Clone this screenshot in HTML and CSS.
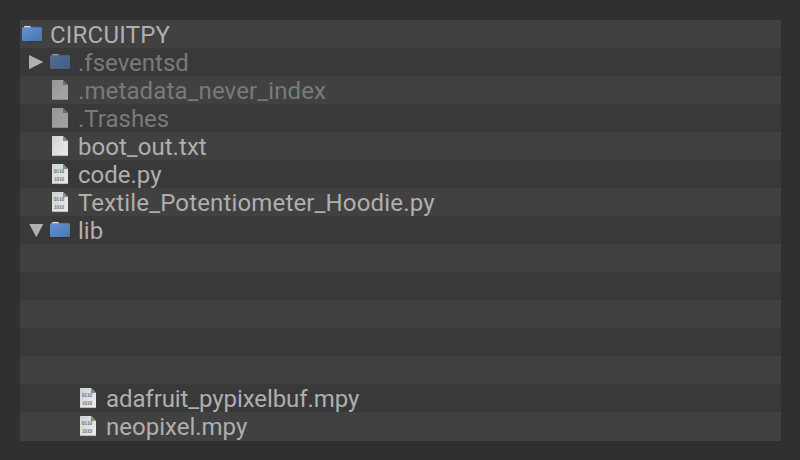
FILE: index.html
```html
<!DOCTYPE html>
<html lang="en">
<head>
<meta charset="utf-8">
<title>CIRCUITPY</title>
<link rel="stylesheet" href="styles.css">
</head>
<body>
<svg class="defs" width="0" height="0">
  <defs>
    <linearGradient id="blue" x1="0" y1="0" x2="1" y2="1"><stop offset="0" stop-color="#6094d0"/><stop offset="1" stop-color="#4a76b0"/></linearGradient>
    <linearGradient id="paper" x1="0" y1="0" x2="1" y2="1"><stop offset="0" stop-color="#d0d2d1"/><stop offset="1" stop-color="#ececec"/></linearGradient>
    <symbol id="folder" viewBox="0 0 24 28">
      <path d="M4 8V6.6Q4 6 5 6h5l1 1v1.4z" fill="#dedede"/>
      <path d="M11 6.4h10v1H11z" fill="#35506f"/>
      <path d="M7 21h14.5v.6H7z" fill="#26303c"/>
      <path d="M2 8.2Q2 7.2 3.2 7.2h17.6Q22 7.2 22 8.2v11.6q0 1.2-1.2 1.2H3.2Q2 21 2 19.8z" fill="url(#blue)"/>
    </symbol>
    <symbol id="file" viewBox="0 0 24 28">
      <path d="M4 4h11l5 5v15H4z" fill="url(#paper)"/>
      <path d="M15 4v5h5z" fill="#858988"/>
      <path d="M4 23.6h16" stroke="#a8acab" stroke-width=".8"/>
    </symbol>
    <symbol id="binary" viewBox="0 0 24 28">
      <use href="#file"/>
      <text x="6" y="13" textLength="10" lengthAdjust="spacingAndGlyphs">0110</text>
      <text x="6" y="21" textLength="10" lengthAdjust="spacingAndGlyphs">1010</text>
    </symbol>
  </defs>
</svg>
<ul class="tree">
  <li class="row"><svg class="icon"><use href="#folder"/></svg><span class="name wide">CIRCUITPY</span></li>
  <li class="row child"><svg class="arrow" viewBox="0 0 28 28"><path d="M9 7v14.2L23.4 14z"/></svg><svg class="icon hidden-item"><use href="#folder"/></svg><span class="name dim">.fseventsd</span></li>
  <li class="row child"><i class="arrow"></i><svg class="icon hidden-item"><use href="#file"/></svg><span class="name dim medium">.metadata_never_index</span></li>
  <li class="row child"><i class="arrow"></i><svg class="icon hidden-item"><use href="#file"/></svg><span class="name dim">.Trashes</span></li>
  <li class="row child"><i class="arrow"></i><svg class="icon"><use href="#file"/></svg><span class="name slight">boot_out.txt</span></li>
  <li class="row child"><i class="arrow"></i><svg class="icon"><use href="#binary"/></svg><span class="name">code.py</span></li>
  <li class="row child"><i class="arrow"></i><svg class="icon"><use href="#binary"/></svg><span class="name long">Textile_Potentiometer_Hoodie.py</span></li>
  <li class="row child"><svg class="arrow" viewBox="0 0 28 28"><path d="M9.3 8h14L16.3 21.3z"/></svg><svg class="icon"><use href="#folder"/></svg><span class="name">lib</span></li>
  <li class="row"></li>
  <li class="row"></li>
  <li class="row"></li>
  <li class="row"></li>
  <li class="row"></li>
  <li class="row grandchild"><svg class="icon"><use href="#binary"/></svg><span class="name tight">adafruit_pypixelbuf.mpy</span></li>
  <li class="row grandchild"><svg class="icon"><use href="#binary"/></svg><span class="name">neopixel.mpy</span></li>
</ul>
</body>
</html>
```
FILE: styles.css
```css
body {
  margin: 0;
  height: 460px;
  overflow: hidden;
  background: #303030;
}
.defs { display: block; }
.tree {
  margin: 20px 19px 0 20px;
  padding: 0;
  list-style: none;
  font: 24px/28px Roboto, sans-serif;
  color: #afafaf;
}
.row {
  display: flex;
  height: 28px;
  background: #393939;
  white-space: pre;
}
.row:nth-child(odd) { background: #414141; }
.row:last-child { padding-bottom: 1px; }
.grandchild { padding-left: 56px; }
.arrow {
  width: 28px;
  height: 28px;
  fill: #b0b0b0;
}
.icon {
  width: 24px;
  height: 28px;
  margin-right: 6px;
}
#binary text {
  font: 6px "Liberation Serif", serif;
  fill: #333;
}
.name { padding-top: 1px; }
.wide { letter-spacing: .22px; }
.medium { letter-spacing: .12px; }
.slight { letter-spacing: .04px; }
.long { letter-spacing: .16px; }
.tight { letter-spacing: -.09px; }
.dim { color: #7a7a7a; }
.hidden-item { opacity: .6; }
```
